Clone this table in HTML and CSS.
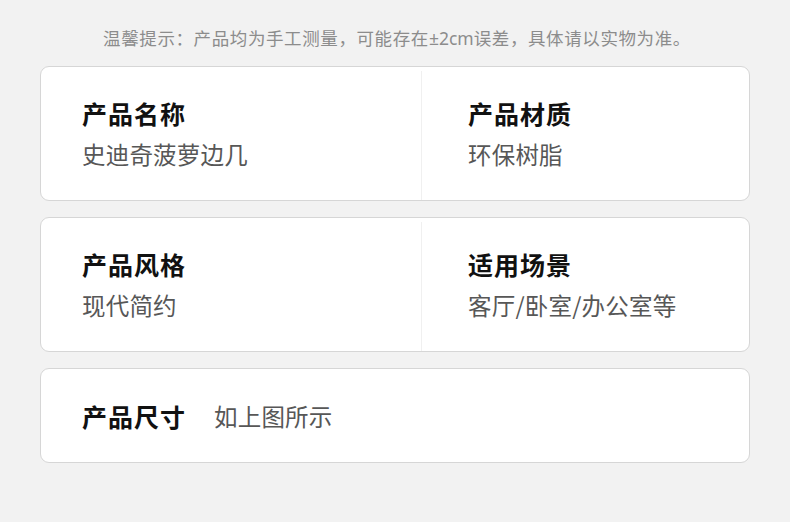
FILE: index.html
```html
<!DOCTYPE html>
<html lang="zh-CN">
<head>
<meta charset="utf-8">
<link rel="stylesheet" href="styles.css">
</head>
<body>
<div class="page">
  <p class="notice">温馨提示：产品均为手工测量，可能存在<span class="latin">±2cm</span>误差，具体请以实物为准。</p>
  <div class="card two">
    <div class="cell left">
      <div class="label">产品名称</div>
      <div class="value">史迪奇菠萝边几</div>
    </div>
    <div class="cell right">
      <div class="label">产品材质</div>
      <div class="value">环保树脂</div>
    </div>
  </div>
  <div class="card two">
    <div class="cell left">
      <div class="label">产品风格</div>
      <div class="value">现代简约</div>
    </div>
    <div class="cell right">
      <div class="label">适用场景</div>
      <div class="value">客厅/卧室/办公室等</div>
    </div>
  </div>
  <div class="card single">
    <div class="label">产品尺寸</div>
    <div class="value inline">如上图所示</div>
  </div>
</div>
</body>
</html>
```
FILE: styles.css
```css
* { box-sizing: border-box; }
html, body { margin: 0; padding: 0; }
body {
  background: #f2f2f2;
  font-family: "Noto Sans CJK SC", "Noto Sans", sans-serif;
  width: 790px;
  height: 522px;
  overflow: hidden;
}
.page {
  padding: 0 40px 0 40px;
  display: flex;
  flex-direction: column;
  gap: 16px;
}
.notice {
  margin: 26px 0 0 0;
  height: 24px;
  line-height: 24px;
  text-align: center;
  font-size: 17.5px;
  letter-spacing: 0.6px;
  color: #8c8c8c;
  padding-left: 4px;
}
.latin {
  font-family: "Noto Sans", sans-serif;
  letter-spacing: 0;
}
.card {
  background: #fff;
  border: 1px solid #d6d6d6;
  border-radius: 9px;
  width: 710px;
}
.two {
  height: 135px;
  display: grid;
  grid-template-columns: 381px 1fr;
  padding: 4px 0 0 0;
}
.cell {
  display: flex;
  flex-direction: column;
  justify-content: center;
  gap: 11px;
  padding-bottom: 4px;
}
.left {
  padding-left: 41px;
  border-right: 1px solid #f0f0f0;
}
.right { padding-left: 46px; }
.label {
  font-size: 25px;
  font-weight: 700;
  color: #111;
  letter-spacing: 1px;
  line-height: 30px;
}
.value {
  font-size: 23.5px;
  color: #575757;
  letter-spacing: 0.2px;
  line-height: 30px;
}
.single {
  height: 95px;
  display: flex;
  align-items: center;
  padding-left: 41px;
  gap: 28px;
}
```
